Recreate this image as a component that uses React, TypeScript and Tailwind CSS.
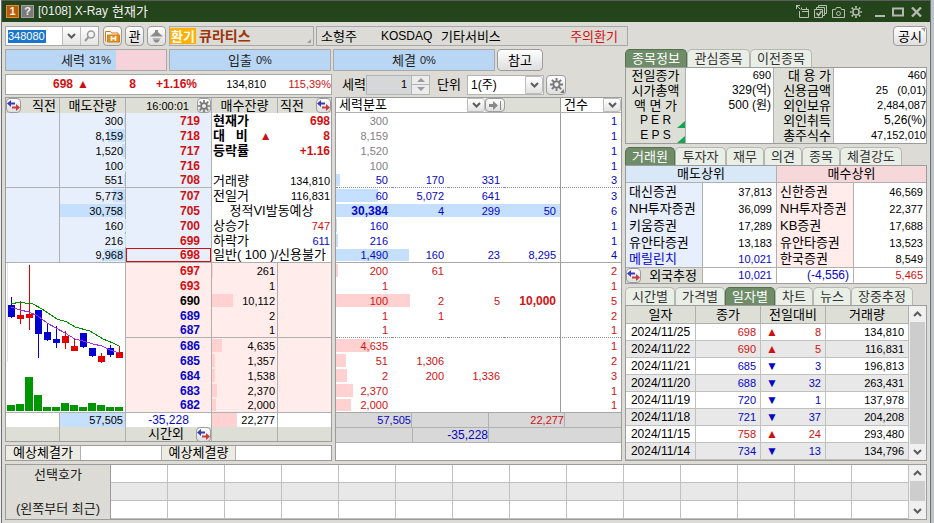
import type { ReactNode } from "react";

const RED = "text-[#d01010]";
const BLUE = "text-[#0606c4]";
const GRAY = "text-[#808080]";
const BLACK = "text-black";
const BOLD = "font-bold";
const BTN = "flex items-center justify-center rounded-[4px] border border-[#9c9c9c] bg-linear-to-b from-white to-[#dedede]";

type Ask = { qty: number; price: string; list: string[]; cnt: string; tone?: string };
type Bid = { qty: number; price: string; priceTone: string; list: string[]; cnt: string };

const MAX_QTY = 30758;
const fmt = (n: number) => n.toLocaleString("en-US");

const asks: Ask[] = [
  { qty: 300, price: "719", list: ["300"], cnt: "1", tone: GRAY },
  { qty: 8159, price: "718", list: ["8,159"], cnt: "1", tone: GRAY },
  { qty: 1520, price: "717", list: ["1,520"], cnt: "1", tone: GRAY },
  { qty: 100, price: "716", list: ["100"], cnt: "1", tone: GRAY },
  { qty: 551, price: "708", list: ["50", "170", "331"], cnt: "3" },
  { qty: 5773, price: "707", list: ["60", "5,072", "641"], cnt: "3" },
  { qty: 30758, price: "705", list: ["30,384", "4", "299", "50"], cnt: "6" },
  { qty: 160, price: "700", list: ["160"], cnt: "1" },
  { qty: 216, price: "699", list: ["216"], cnt: "1" },
  { qty: 9968, price: "698", list: ["1,490", "160", "23", "8,295"], cnt: "4" },
];

const bids: Bid[] = [
  { qty: 261, price: "697", priceTone: RED, list: ["200", "61"], cnt: "2" },
  { qty: 1, price: "693", priceTone: RED, list: ["1"], cnt: "1" },
  { qty: 10112, price: "690", priceTone: BLACK, list: ["100", "2", "5", "10,000"], cnt: "5" },
  { qty: 2, price: "689", priceTone: BLUE, list: ["1", "1"], cnt: "2" },
  { qty: 1, price: "687", priceTone: BLUE, list: ["1"], cnt: "1" },
  { qty: 4635, price: "686", priceTone: BLUE, list: ["4,635"], cnt: "1" },
  { qty: 1357, price: "685", priceTone: BLUE, list: ["51", "1,306"], cnt: "2" },
  { qty: 1538, price: "684", priceTone: BLUE, list: ["2", "200", "1,336"], cnt: "3" },
  { qty: 2370, price: "683", priceTone: BLUE, list: ["2,370"], cnt: "1" },
  { qty: 2000, price: "682", priceTone: BLUE, list: ["2,000"], cnt: "1" },
];

const info: { label: string; mark?: string; value?: string; tone?: string; bold?: boolean; center?: boolean }[] = [
  { label: "현재가", value: "698", tone: RED, bold: true },
  { label: "대   비", mark: "▲", value: "8", tone: RED, bold: true },
  { label: "등락률", value: "+1.16", tone: RED, bold: true },
  { label: "" },
  { label: "거래량", value: "134,810" },
  { label: "전일거", value: "116,831" },
  { label: "정적VI발동예상", center: true },
  { label: "상승가", value: "747", tone: RED },
  { label: "하락가", value: "611", tone: BLUE },
  { label: "일반( 100 )/신용불가" },
];

const stockInfo = [
  ["전일종가", "690", "대 용 가", "460"],
  ["시가총액", "329(억)", "신용금액", "25   (0,01)"],
  ["액 면 가", "500 (원)", "외인보유", "2,484,087"],
  ["P E R", "", "외인취득", "5,26(%)"],
  ["E P S", "", "총주식수", "47,152,010"],
];

const brokers = [
  ["대신증권", "37,813", "신한증권", "46,569"],
  ["NH투자증권", "36,099", "NH투자증권", "22,377"],
  ["키움증권", "17,289", "KB증권", "17,688"],
  ["유안타증권", "13,183", "유안타증권", "13,523"],
  ["메릴린치", "10,021", "한국증권", "8,549"],
];

const daily: [string, string, boolean, string, string][] = [
  ["2024/11/25", "698", true, "8", "134,810"],
  ["2024/11/22", "690", true, "5", "116,831"],
  ["2024/11/21", "685", false, "3", "196,813"],
  ["2024/11/20", "688", false, "32", "263,431"],
  ["2024/11/19", "720", false, "1", "137,978"],
  ["2024/11/18", "721", false, "37", "204,208"],
  ["2024/11/15", "758", true, "24", "293,480"],
  ["2024/11/14", "734", false, "13", "134,796"],
];

/* up, high, low, body top, body bottom, volume top */
const candles: [boolean, number, number, number, number, number][] = [
  [false, 34, 55, 42, 54, 142],
  [true, 38, 61, 52, 56, 141],
  [true, 2, 67, 51, 55, 114],
  [false, 47, 95, 47, 71, 132],
  [false, 60, 78, 69, 77, 144],
  [false, 63, 85, 76, 80, 144],
  [true, 68, 86, 73, 80, 140],
  [true, 75, 88, 83, 88, 142],
  [false, 70, 85, 70, 84, 144],
  [false, 85, 94, 85, 93, 140],
  [true, 90, 100, 93, 99, 142],
  [false, 82, 94, 85, 92, 144],
  [true, 83, 95, 89, 95, 144],
];

function MiniChart() {
  return (
    <svg viewBox="0 0 119 149" className="block h-[149px] w-full" preserveAspectRatio="none" shapeRendering="crispEdges">
      <rect width="119" height="149" fill="#fff" />
      <path d="M1.5 0V99" stroke="#e4e4e4" />
      {candles.map(([up, hi, lo, top, bot, vol], i) => (
        <g key={i} fill={up ? "#e00000" : "#0000d0"}>
          <rect x={5 + i * 9} y={hi} width="1" height={lo - hi} />
          <rect x={2 + i * 9} y={top} width="7" height={bot - top} />
          <rect x={1 + i * 9} y={vol} width="8" height={148 - vol} fill="#009600" />
        </g>
      ))}
      <polyline fill="none" stroke="#009000" points="5,41 14,39 19,40 27,41 36,46 51,56 61,59 69,64 84,68 97,76 107,80 113,83" />
      <polyline fill="none" stroke="#a030f0" points="5,44 14,47 23,49 32,53 41,60 50,65 59,70 69,76 77,78 87,81 96,83 104,87 113,90" />
    </svg>
  );
}

function Chevron({ dir = "down" }: { dir?: "down" | "up" }) {
  return (
    <svg width="9" height="6" viewBox="0 0 9 6" fill="none" stroke="#5c5c5c" strokeWidth="2">
      <path d={dir === "down" ? "M1 1l3.5 3.5L8 1" : "M1 5l3.5-3.5L8 5"} />
    </svg>
  );
}

function Gear({ className, color = "#777" }: { className?: string; color?: string }) {
  return (
    <svg viewBox="0 0 14 14" className={className} fill="none" stroke={color}>
      <path strokeWidth="2" d="M7 0v3M7 11v3M0 7h3M11 7h3M2 2l2.2 2.2M9.8 9.8L12 12M12 2L9.8 4.2M4.2 9.8L2 12" />
      <circle cx="7" cy="7" r="3.4" strokeWidth="2" />
    </svg>
  );
}

function SwapButton({ label }: { label: string }) {
  return (
    <button type="button" aria-label={label} className={`${BTN} h-[15px] w-[15px] shrink-0`}>
      <svg width="13" height="11" viewBox="0 0 13 11" className="shrink-0">
        <path fill="#3a3ab8" d="M0 3.5L4 0v2.5h4v2H4V7z" />
        <path fill="#c83c3c" d="M13 7.500L9 4v2.500H5v2h4V11z" />
      </svg>
    </button>
  );
}

function Select({ label, value, className }: { label: string; value: string; className: string }) {
  return (
    <div className={`relative flex bg-white ${className}`}>
      <select aria-label={label} defaultValue={value} className="h-full w-full appearance-none bg-transparent pl-[3px] leading-[14px] outline-none">
        <option>{value}</option>
      </select>
      <span className="pointer-events-none absolute inset-y-0 right-0 flex w-[18px] items-center justify-center rounded-r-[3px] border border-[#bcbcbc] bg-linear-to-b from-white to-[#e2e2e2]">
        <Chevron />
      </span>
    </div>
  );
}

function Tabs({ items, active }: { items: [string, string][]; active: string }) {
  return (
    <div role="tablist" className="flex h-[18px]">
      {items.map(([name, width]) => (
        <button
          key={name}
          type="button"
          role="tab"
          aria-selected={name === active}
          className={`${width} shrink-0 rounded-t-[5px] border border-b-0 text-center leading-[17px] whitespace-nowrap ${
            name === active ? "border-[#55704e] bg-[#6f8c69] text-white" : "border-[#b4b8b0] bg-[#e9eee6] text-[#333]"
          }`}
        >
          {name}
        </button>
      ))}
    </div>
  );
}

function ScrollBar({ thumb }: { thumb: string }) {
  return (
    <div className="flex w-[17px] shrink-0 flex-col bg-[#f0f0f0]">
      <button type="button" aria-label="위로" className="flex h-[16px] w-full shrink-0 items-center justify-center">
        <Chevron dir="up" />
      </button>
      <div className="flex-1">
        <div className={`mx-auto w-[15px] bg-[#cdcdcd] ${thumb}`} />
      </div>
      <button type="button" aria-label="아래로" className="flex h-[16px] w-full shrink-0 items-center justify-center">
        <Chevron />
      </button>
    </div>
  );
}

function Gauge({ name, percent, pink = 0 }: { name: string; percent: string; pink?: number }) {
  return (
    <div className="relative flex h-[22px] w-[162px] items-center justify-center border border-[#a8a8a8] bg-[#b9d6f4] text-[#222]">
      <span className="absolute inset-y-0 right-0 bg-[#f6d2da]" style={{ width: `${pink}%` }} />
      <span className="relative">{name}</span>
      <span className="relative ml-[4px] text-[11px]">{percent}</span>
    </div>
  );
}

function TitleBar() {
  return (
    <header className="flex h-[22px] items-center border-t border-[#5c5c5c] bg-[#24441c] pr-2 pl-1 text-[#f0f0f0]">
      <span className="mr-[2px] flex h-[13px] w-[13px] items-center justify-center border border-[#e08a3c] bg-[#b85c08] text-[11px] leading-none font-bold">1</span>
      <span className="mr-[4px] flex h-[13px] w-[13px] items-center justify-center border border-[#a0a0a0] bg-[#7a7a7a] text-[11px] leading-none font-bold">?</span>
      <h1 className="flex flex-1 gap-[4px]">
        <span className="text-[12px]">[0108] X-Ray</span>
        <span>현재가</span>
      </h1>
      <div className="flex items-center gap-[5px]">
        <svg width="13" height="13" viewBox="0 0 13 13" fill="none" stroke="#b8c0b0">
          <path d="M0 .5h4M.5 0v4M.5 .5l4 4M3.500 6v6.500h9v-8H6M5.500 2.500v2M10.500 2.500v2M6 6.500h6" />
        </svg>
        <svg width="13" height="13" viewBox="0 0 13 13" fill="none" stroke="#b8c0b0">
          <path d="M.5 4.500h8v8h-8zM2.500 4V2.500h8v8H9M4.500 2V.5h8v8H11" />
          <path d="M2.500 8l2 2.500 3-4.500" strokeWidth="1.500" />
        </svg>
        <svg width="13" height="12" viewBox="0 0 13 12" fill="none" stroke="#b8c0b0">
          <path d="M.5 3.500h3l1-2h4l1 2h3v8H.5z" />
          <circle cx="6.500" cy="7.500" r="2" />
        </svg>
        <svg width="12" height="12" viewBox="0 0 14 14" fill="none" stroke="#c4cabe">
          <path strokeWidth="2" d="M7 0v2M7 12v2M0 7h2M12 7h2M2 2l1.500 1.500M10.500 10.500L12 12M12 2l-1.500 1.500M3.500 10.500L2 12" />
          <circle cx="7" cy="7" r="3.600" strokeWidth="1.600" />
        </svg>
      </div>
      <div className="ml-[12px] flex items-center gap-[7px]">
        <svg width="11" height="10" viewBox="0 0 11 10"><path d="M1 9h10" stroke="#b4b8b0" strokeWidth="2" /></svg>
        <svg width="12" height="10" viewBox="0 0 12 10"><path d="M1 1.500h10v7H1z" fill="none" stroke="#b4b8b0" strokeWidth="2" /></svg>
        <svg width="11" height="10" viewBox="0 0 11 10"><path d="M1 .5l9 9M10 .5l-9 9" stroke="#b4b8b0" strokeWidth="2.400" /></svg>
      </div>
    </header>
  );
}

function SymbolRow() {
  return (
    <div className="flex h-[20px] items-stretch">
      <div className="flex w-[94px] border border-[#a8a8a8] bg-white">
        <div className="flex w-[56px] items-center pl-[2px]">
          <input aria-label="종목코드" defaultValue="348080" className="h-[13px] w-[38px] bg-[#1a76cc] p-0 text-[11px] leading-[13px] text-white outline-none" />
        </div>
        <button type="button" aria-label="종목 목록" className="flex w-[18px] items-center justify-center border-l border-[#bcbcbc] bg-linear-to-b from-white to-[#e4e4e4]">
          <Chevron />
        </button>
        <button type="button" aria-label="검색" className="flex flex-1 items-center justify-center border-l border-[#bcbcbc] bg-linear-to-b from-white to-[#e4e4e4]">
          <svg width="12" height="12" viewBox="0 0 12 12" fill="none" stroke="#999" strokeWidth="1.500">
            <circle cx="7" cy="4.500" r="3.500" />
            <path d="M4.500 7L1 11" strokeWidth="2" />
          </svg>
        </button>
      </div>
      <button type="button" aria-label="종목 이력" className={`${BTN} ml-[4px] w-[19px]`}>
        <svg width="15" height="13" viewBox="0 0 15 13" className="shrink-0">
          <path d="M.5 11.500V1.500h5l1 1.500h6.500v2" fill="#fff" stroke="#d07a10" />
          <path d="M2.500 12V5h12v7z" fill="#e8901c" stroke="#d07a10" />
          <path d="M6.500 6v5M10.500 6v5M6.500 8.500h4" stroke="#fff" strokeWidth="1.500" />
        </svg>
      </button>
      <button type="button" className={`${BTN} ml-[3px] w-[19px] leading-none`}>관</button>
      <button type="button" aria-label="알림" className={`${BTN} ml-[3px] w-[19px]`}>
        <svg width="13" height="13" viewBox="0 0 13 13" fill="#8c8c8c">
          <path d="M5 0h3v2l1 1 4 3.500H0L4 3l1-1z" />
          <path d="M2 8h9l-1.500 1.500h-6z" fill="#b4b4b4" />
          <path d="M3 9.500h7L8 12.500H5z" />
        </svg>
      </button>
      <div className="relative ml-[3px] flex w-[145px] items-center border border-[#a8a8a8]">
        <span className="flex h-[16px] w-[26px] items-center justify-center bg-[#ffb000] font-bold text-white">환기</span>
        <span className="ml-[3px] text-[14px] font-bold text-[#9c3408]">큐라티스</span>
        <span className="absolute right-[2px] bottom-[2px] border-[2px] border-transparent border-r-[#a0a0a0] border-b-[#a0a0a0]" />
      </div>
      <div className="ml-[2px] flex w-[312px] items-center border border-[#a8a8a8] pr-[9px] pl-[4px]">
        <span className="w-[60px]">소형주</span>
        <span className="w-[60px] text-[12px]">KOSDAQ</span>
        <span className="flex-1">기타서비스</span>
        <span className={RED}>주의환기</span>
      </div>
      <button type="button" className={`${BTN} relative ml-auto w-[34px] leading-none`}>
        공시
        <span className="absolute top-px right-px border-[2px] border-transparent border-t-[#a0a0a0] border-r-[#a0a0a0]" />
      </button>
    </div>
  );
}

function GaugeRow() {
  return (
    <div className="flex h-[22px] gap-[2px]">
      <Gauge name="세력" percent="31%" pink={31} />
      <Gauge name="입출" percent="0%" />
      <Gauge name="체결" percent="0%" />
      <button type="button" className={`${BTN} w-[46px]`}>참고</button>
    </div>
  );
}

function PriceRow() {
  return (
    <div className="flex h-[21px] items-center">
      <div className={`flex h-full w-[327px] items-center border border-[#a8a8a8] bg-white text-right ${RED}`}>
        <span className={`w-[67px] text-[12px] ${BOLD}`}>698</span>
        <span className="w-[16px] text-[12px]">▲</span>
        <span className={`w-[47px] text-[12px] ${BOLD}`}>8</span>
        <span className={`w-[61px] text-[12px] ${BOLD}`}>+1.16%</span>
        <span className={`w-[69px] text-[11px] ${BLACK}`}>134,810</span>
        <span className="flex-1 text-[11px]">115,39%</span>
      </div>
      <label htmlFor="force" className="ml-[10px] w-[24px]">세력</label>
      <div className="flex h-[20px] w-[64px] border border-[#b4b4b4] bg-[#d6d7d9]">
        <input id="force" inputMode="numeric" defaultValue="1" className="w-[44px] bg-transparent pr-[4px] text-right text-[11px] outline-none" />
        <span className="flex flex-1 flex-col border-l border-[#b4b4b4] bg-[#ececec]">
          <button type="button" aria-label="증가" className="flex flex-1 items-center justify-center border-b border-[#b4b4b4]">
            <svg width="8" height="5" viewBox="0 0 8 5"><path d="M0 5l4-4 4 4z" fill="#9a9a9a" /></svg>
          </button>
          <button type="button" aria-label="감소" className="flex flex-1 items-center justify-center">
            <svg width="8" height="5" viewBox="0 0 8 5"><path d="M0 0l4 4 4-4z" fill="#9a9a9a" /></svg>
          </button>
        </span>
      </div>
      <span className="ml-[7px] w-[30px]">단위</span>
      <Select label="단위" value="1(주)" className="h-[20px] w-[77px] border border-[#b4b4b4] text-[12px]" />
      <button type="button" aria-label="설정" className={`${BTN} relative ml-[2px] h-[20px] w-[20px]`}>
        <Gear className="h-[13px] w-[13px]" />
        <span className="absolute right-px bottom-px border-[2px] border-transparent border-r-[#777] border-b-[#777]" />
      </button>
    </div>
  );
}

const LINE = "border-[#b0b0b0]";

function QtyCell({ qty, side, className = "" }: { qty: number; side: "ask" | "bid"; className?: string }) {
  const width = `${Math.min(100, (qty / MAX_QTY) * 100)}%`;
  return (
    <td className={`relative border-r p-0 pr-[2px] text-right text-[11px] ${LINE} ${className}`}>
      <span className={`absolute top-px bottom-px ${side === "ask" ? "right-0 bg-[#c5dffe]" : "left-0 bg-[#ffd2d1]"}`} style={{ width }} />
      <span className="relative">{fmt(qty)}</span>
    </td>
  );
}

function OrderBook() {
  return (
    <div className="flex w-[327px] shrink-0 flex-col">
      <table className="w-full table-fixed border-separate border-spacing-0 border border-[#9c9c9c] bg-[#dddfd6] leading-[14px]">
        <colgroup>
          <col className="w-[54px]" />
          <col className="w-[66px]" />
          <col className="w-[86px]" />
          <col className="w-[66px]" />
          <col />
        </colgroup>
        <thead>
          <tr className="h-[15px] [&>th]:p-0 [&>th]:font-normal">
            <th className={`border-r ${LINE}`}>
              <div className="flex h-[15px] items-center justify-between pr-[3px]"><SwapButton label="매도 전환" />직전</div>
            </th>
            <th className={`border-r ${LINE}`}>매도잔량</th>
            <th className={`border-r ${LINE}`}>
              <div className="flex h-[15px] items-center justify-end gap-[8px]">
                <span className="text-[11px]">16:00:01</span>
                <button type="button" aria-label="호가 설정" className={`${BTN} h-[15px] w-[14px]`}><Gear className="h-[12px] w-[12px] shrink-0" /></button>
              </div>
            </th>
            <th className={`border-r ${LINE}`}>매수잔량</th>
            <th>
              <div className="flex h-[15px] items-center justify-between pl-[2px]">직전<SwapButton label="매수 전환" /></div>
            </th>
          </tr>
        </thead>
        <tbody>
          {asks.map((a, i) => {
            const b = i === 4 || i === 9 ? "border-b" : "";
            const f = info[i];
            return (
              <tr key={a.price} className="h-[15px] bg-[#e8effc]">
                <td className={`border-r p-0 ${LINE} ${b}`} />
                <QtyCell qty={a.qty} side="ask" className={b} />
                <td className={`border-r p-0 ${LINE} ${b}`}>
                  <div className={`text-right text-[12px] ${RED} ${BOLD} ${i === 9 ? "border border-[#d01010] pr-[10px] leading-[12px]" : "pr-[11px]"}`}>{a.price}</div>
                </td>
                <td colSpan={2} className={`bg-white p-0 ${LINE} ${i === 9 ? "border-b" : ""}`}>
                  <div className={`flex pr-px pl-px whitespace-pre ${f.center ? "justify-center" : ""} ${f.bold ? BOLD : ""}`}>
                    <span>{f.label}</span>
                    {f.mark && <span className={`ml-[12px] text-[12px] ${RED}`}>{f.mark}</span>}
                    {f.value && <span className={`ml-auto ${f.bold ? "text-[12px]" : "text-[11px]"} ${f.tone ?? BLACK}`}>{f.value}</span>}
                  </div>
                </td>
              </tr>
            );
          })}
          {bids.map((r, i) => {
            const b = i === 4 || i === 9 ? "border-b" : "";
            return (
              <tr key={r.price} className="h-[15px] bg-[#ffeceb]">
                {i === 0 && (
                  <td rowSpan={10} colSpan={2} className={`border-r border-b bg-white p-0 ${LINE}`}>
                    <MiniChart />
                  </td>
                )}
                <td className={`border-r p-0 pr-[11px] text-right text-[12px] ${LINE} ${b} ${r.priceTone} ${BOLD}`}>{r.price}</td>
                <QtyCell qty={r.qty} side="bid" className={b} />
                <td className={`p-0 ${LINE} ${b}`} />
              </tr>
            );
          })}
          <tr className="h-[14px] bg-white text-[11px]">
            <td className={`border-r p-0 ${LINE}`} />
            <td className={`border-r bg-[#c5dffe] p-0 pr-[2px] text-right ${LINE}`}>57,505</td>
            <td className={`border-r p-0 text-center text-[12px] ${LINE} ${BLUE}`}>-35,228</td>
            <td className={`relative border-r p-0 pr-[2px] text-right ${LINE}`}>
              <span className="absolute inset-y-0 left-0 w-[25px] bg-[#ffd2d1]" />
              <span className="relative">22,277</span>
            </td>
            <td className="p-0" />
          </tr>
          <tr className="h-[14px]">
            <td className={`border-r p-0 ${LINE}`} />
            <td className={`border-r p-0 ${LINE}`} />
            <td className={`border-r p-0 ${LINE}`}>
              <div className="flex h-[14px] items-center justify-end gap-[12px]">시간외<SwapButton label="시간외 전환" /></div>
            </td>
            <td className={`border-r p-0 ${LINE}`} />
            <td className="p-0" />
          </tr>
        </tbody>
      </table>
      <dl className="mt-[3px] flex h-[16px] border border-[#9c9c9c] bg-white leading-[14px]">
        <dt className={`w-[75px] border-r bg-[#ecece4] text-center ${LINE}`}>예상체결가</dt>
        <dd className="w-[80px]" />
        <dt className={`w-[75px] border-x bg-[#ecece4] text-center ${LINE}`}>예상체결량</dt>
        <dd className="flex-1" />
      </dl>
    </div>
  );
}

function SpreadRow({ list, cnt, tone, cntTone, qty, barTone, line }: { list: string[]; cnt: string; tone: string; cntTone: string; qty: number; barTone: string; line: string }) {
  const showBar = tone !== GRAY;
  return (
    <tr className="h-[15px]">
      {[0, 1, 2, 3].map((c) => {
        const strong = list[c] === "30,384" || list[c] === "10,000";
        return (
          <td key={c} className={`relative p-0 pr-[4px] text-right ${tone} ${line} ${strong ? "text-[12px] " + BOLD : "text-[11px]"}`}>
            {c === 0 && showBar && (
              <span className={`absolute top-px bottom-px left-0 ${barTone}`} style={{ width: `${(qty / MAX_QTY) * 400}%` }} />
            )}
            <span className="relative">{list[c] ?? ""}</span>
          </td>
        );
      })}
      <td className={`border-l border-l-[#9c9c9c] p-0 pr-[4px] text-right text-[11px] ${cntTone} ${line}`}>{cnt}</td>
    </tr>
  );
}

function lineFor(i: number) {
  if (i === 4) return "border-b [border-bottom-style:dotted]! border-b-[#909090]";
  if (i === 9) return "border-b border-b-[#a8a8a8]";
  return "";
}

function Distribution() {
  return (
    <div className="flex min-w-0 flex-1 flex-col border border-[#9c9c9c] bg-white leading-[14px]">
      <div className="flex h-[15px] border-b border-[#b0b0b0] bg-[#dddfd6]">
        <Select label="분포" value="세력분포" className="w-[149px]" />
        <button type="button" aria-label="다음" className={`${BTN} w-[20px]`}>
          <svg width="13" height="9" viewBox="0 0 13 9" fill="#888">
            <path d="M0 3h4V0l5 4.500L4 9V6H0zM11 0h1v9h-1z" />
          </svg>
        </button>
        <span className="flex-1" />
        <Select label="건수" value="건수" className="w-[61px] border-l border-[#9c9c9c]" />
      </div>
      <table className="w-full table-fixed border-separate border-spacing-0">
        <colgroup>
          <col />
          <col />
          <col />
          <col />
          <col className="w-[61px]" />
        </colgroup>
        <tbody>
          {asks.map((a, i) => (
            <SpreadRow key={a.price} list={a.list} cnt={a.cnt} qty={a.qty} tone={a.tone ?? BLUE} cntTone={BLUE} barTone="bg-[#c5dffe]" line={lineFor(i)} />
          ))}
          {bids.map((r, i) => (
            <SpreadRow key={r.price} list={r.list} cnt={r.cnt} qty={r.qty} tone={RED} cntTone={RED} barTone="bg-[#ffd2d1]" line={lineFor(i)} />
          ))}
        </tbody>
      </table>
      <div className={`grid h-[15px] grid-cols-[76px_77px_76px_1fr] border-b bg-[#d8d8d8] text-right text-[11px] ${LINE}`}>
        <span className={`border-r ${LINE} ${BLUE}`}>57,505</span>
        <span className={`border-r ${LINE}`} />
        <span className={`border-r ${LINE} ${RED}`}>22,277</span>
      </div>
      <div className={`grid h-[15px] grid-cols-[77px_76px_1fr] border-b bg-[#d8d8d8] text-right text-[12px] ${LINE}`}>
        <span className={`border-r ${LINE}`} />
        <span className={`border-r ${LINE} ${BLUE}`}>-35,228</span>
      </div>
    </div>
  );
}

function Corner() {
  return (
    <svg width="8" height="7" viewBox="0 0 8 7" className="absolute right-0 bottom-0">
      <path d="M8 0v7H0z" fill="#10a850" />
    </svg>
  );
}

function Panel({ children }: { children: ReactNode }) {
  return <div className="flex border border-[#9c9c9c] bg-white">{children}</div>;
}

function valueSize(v: string) {
  return v.includes("(") && !v.includes(" (0") ? "text-[12px]" : "text-[11px]";
}

function StockInfo() {
  return (
    <section>
      <Tabs active="종목정보" items={[["종목정보", "w-[62px]"], ["관심종목", "w-[63px]"], ["이전종목", "w-[62px]"]]} />
      <Panel>
        <table className="w-full table-fixed border-separate border-spacing-0 leading-[15px]">
          <colgroup>
            <col className="w-[60px]" />
            <col className="w-[88px]" />
            <col className="w-[60px]" />
            <col />
          </colgroup>
          <tbody>
            {stockInfo.map(([l1, v1, l2, v2]) => (
              <tr key={l1} className="h-[15px] whitespace-pre">
                <th scope="row" className={`relative border-r bg-[#dddfd6] p-0 font-normal ${LINE} ${v1 === "" ? "text-[12px]" : ""}`}>
                  {l1}
                  {v1 === "" && <Corner />}
                </th>
                <td className={`border-r p-0 pr-[2px] text-right ${LINE} ${valueSize(v1)}`}>{v1}</td>
                <th scope="row" className={`border-r bg-[#dddfd6] p-0 pr-[2px] text-right font-normal ${LINE}`}>{l2}</th>
                <td className={`p-0 text-right ${valueSize(v2)}`}>{v2}</td>
              </tr>
            ))}
          </tbody>
        </table>
      </Panel>
    </section>
  );
}

function Brokers() {
  return (
    <section className="mt-[3px]">
      <Tabs
        active="거래원"
        items={[["거래원", "w-[50px]"], ["투자자", "w-[51px]"], ["재무", "w-[38px]"], ["의견", "w-[38px]"], ["종목", "w-[38px]"], ["체결강도", "w-[62px]"]]}
      />
      <Panel>
        <table className="w-full table-fixed border-separate border-spacing-0 leading-[16px]">
          <colgroup>
            <col className="w-[77px]" />
            <col className="w-[74px]" />
            <col className="w-[77px]" />
            <col />
          </colgroup>
          <thead>
            <tr className="h-[17px] [&>th]:p-0 [&>th]:font-normal">
              <th colSpan={2} className={`border-r border-b bg-[#d9e8f7] ${LINE}`}>매도상위</th>
              <th colSpan={2} className={`border-b bg-[#f6d8da] ${LINE}`}>매수상위</th>
            </tr>
          </thead>
          <tbody>
            {brokers.map(([n1, v1, n2, v2], i) => {
              const b = i === 4 ? "border-b" : "";
              const tone = i === 4 ? BLUE : BLACK;
              return (
                <tr key={n1} className="h-[17px]">
                  <td className={`border-r bg-[#e8effc] p-0 pl-[3px] ${LINE} ${b} ${tone}`}>{n1}</td>
                  <td className={`border-r p-0 pr-[4px] text-right text-[11px] ${LINE} ${b} ${tone}`}>{v1}</td>
                  <td className={`border-r bg-[#ffeceb] p-0 pl-[3px] ${LINE} ${b}`}>{n2}</td>
                  <td className={`p-0 pr-[3px] text-right text-[11px] ${LINE} ${b}`}>{v2}</td>
                </tr>
              );
            })}
            <tr className="h-[15px] leading-[15px]">
              <td className={`border-r bg-[#dddfd6] p-0 ${LINE}`}>
                <div className="flex h-[15px] items-center justify-between pr-[5px]"><SwapButton label="외국 전환" />외국추정</div>
              </td>
              <td className={`border-r p-0 pr-[4px] text-right text-[11px] ${LINE} ${BLUE}`}>10,021</td>
              <td className={`border-r p-0 pr-[4px] text-right text-[12px] ${LINE} ${BLUE}`}>(-4,556)</td>
              <td className={`p-0 pr-[3px] text-right text-[11px] ${RED}`}>5,465</td>
            </tr>
          </tbody>
        </table>
      </Panel>
    </section>
  );
}

function Daily() {
  return (
    <section className="mt-[3px]">
      <Tabs
        active="일자별"
        items={[["시간별", "w-[50px]"], ["가격별", "w-[50px]"], ["일자별", "w-[50px]"], ["차트", "w-[38px]"], ["뉴스", "w-[38px]"], ["장중추정", "w-[62px]"]]}
      />
      <Panel>
        <table className="min-w-0 flex-1 table-fixed border-separate border-spacing-0 leading-[16px]">
          <colgroup>
            <col className="w-[70px]" />
            <col className="w-[65px]" />
            <col className="w-[65px]" />
            <col />
          </colgroup>
          <thead>
            <tr className="h-[18px] bg-[#dddfd6]">
              {["일자", "종가", "전일대비", "거래량"].map((h) => (
                <th key={h} className={`border-r border-b p-0 font-normal ${LINE}`}>{h}</th>
              ))}
            </tr>
          </thead>
          <tbody className="text-[11px]">
            {daily.map(([date, close, up, diff, vol], i) => {
              const tone = up ? RED : BLUE;
              return (
                <tr key={date} className={`h-[17px] ${i % 2 ? "bg-[#e8e8e8]" : "bg-white"} [&>td]:border-r [&>td]:border-b [&>td]:border-[#c0c0c0]`}>
                  <td className="p-0 text-center text-[12px]">{date}</td>
                  <td className={`p-0 pr-[4px] text-right ${tone}`}>{close}</td>
                  <td className={`p-0 ${tone}`}>
                    <div className="flex items-center justify-between pr-[4px] pl-[5px]">
                      <span className="text-[12px]">{up ? "▲" : "▼"}</span>
                      {diff}
                    </div>
                  </td>
                  <td className="p-0 pr-[4px] text-right">{vol}</td>
                </tr>
              );
            })}
          </tbody>
        </table>
        <ScrollBar thumb="h-full" />
      </Panel>
    </section>
  );
}

function SelectedQuotes() {
  return (
    <div className="mt-[3px] flex border border-[#9c9c9c] bg-[#dddbd6]">
      <div className="flex w-[104px] shrink-0 flex-col items-center justify-between py-px leading-[18px] text-[#222]">
        <span>선택호가</span>
        <span>(왼쪽부터 최근)</span>
      </div>
      <table className="min-w-0 flex-1 table-fixed border-separate border-spacing-0 border-l border-[#9c9c9c]">
        <tbody>
          {[0, 1, 2].map((r) => (
            <tr key={r} className={`h-[18px] ${r === 1 ? "bg-[#e8e8e8]" : "bg-white"}`}>
              {Array.from({ length: 14 }, (_, c) => (
                <td key={c} className="border-r border-b border-[#c0c0c0] p-0" />
              ))}
            </tr>
          ))}
        </tbody>
      </table>
      <ScrollBar thumb="h-[20px]" />
    </div>
  );
}

export default function App() {
  return (
    <div className="flex min-h-screen border-r-[3px] border-l border-r-[#bcc4ca] border-l-[#f0eeee] font-['Liberation_Sans','Noto_Sans_CJK_KR',sans-serif] text-[13px] leading-[15px] text-black">
      <div className="flex min-w-0 flex-1 flex-col border-x border-[#6c7074] bg-[#dddbd6]">
        <TitleBar />
        <main className="px-[3px] pt-[4px] pb-[3px]">
          <SymbolRow />
          <div className="mt-[3px] flex gap-[3px]">
            <div className="flex min-w-0 flex-1 flex-col">
              <GaugeRow />
              <div className="mt-[3px]">
                <PriceRow />
              </div>
              <div className="mt-[2px] flex flex-1 gap-[3px]">
                <OrderBook />
                <Distribution />
              </div>
            </div>
            <div className="w-[302px] shrink-0">
              <StockInfo />
              <Brokers />
              <Daily />
            </div>
          </div>
          <SelectedQuotes />
        </main>
      </div>
    </div>
  );
}
